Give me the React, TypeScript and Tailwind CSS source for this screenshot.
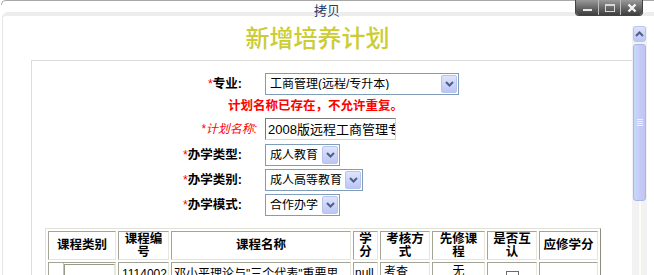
import React from "react";

const cellBorder =
  "border border-t-[#a4a494] border-l-[#a4a494] border-b-[#e6e6da] border-r-[#e6e6da]";

const DropButton = () => (
  <div className="flex h-[18px] w-[16px] shrink-0 items-center justify-center rounded-[2px] border border-[#b8c3ef] bg-linear-to-b from-[#dfe5fd] to-[#bcc6f5]">
    <svg width="9" height="6" viewBox="0 0 9 6">
      <path d="M1 1 L4.5 4.5 L8 1" fill="none" stroke="#4d6185" strokeWidth="2" />
    </svg>
  </div>
);

const Select = ({ value, width }: { value: string; width: string }) => (
  <div className={`flex h-[22px] items-center border border-[#7f9db9] bg-white pl-[4px] pr-[1px] ${width}`}>
    <span className="flex-1 overflow-hidden whitespace-nowrap text-[12px] leading-none text-black">
      {value}
    </span>
    <DropButton />
  </div>
);

const Label = ({ text }: { text: string }) => (
  <div className="w-[233px] pr-[23px] text-right text-[12.5px] font-bold leading-none text-black">
    <span className="font-normal text-[#ff0000]">*</span>
    {text}:
  </div>
);

const heads: { w: string; lines: string[] }[] = [
  { w: "w-[68px]", lines: ["课程类别"] },
  { w: "w-[51px]", lines: ["课程编", "号"] },
  { w: "w-[180px]", lines: ["课程名称"] },
  { w: "w-[25px]", lines: ["学", "分"] },
  { w: "w-[50px]", lines: ["考核方", "式"] },
  { w: "w-[53px]", lines: ["先修课", "程"] },
  { w: "w-[50px]", lines: ["是否互", "认"] },
  { w: "w-[59px]", lines: ["应修学分"] },
];

export default function App() {
  return (
    <div className="relative h-[275px] w-[654px] overflow-hidden bg-white font-['Liberation_Sans','Noto_Sans_CJK_SC',sans-serif]">
      {/* outer window frame */}
      <div className="h-[12px]">
        <div className="ml-[1px] h-[5px] rounded-tl-[5px] border-l border-t border-[#a8a8a8]" />
      </div>

      <div className="absolute left-1/2 top-[3px] -translate-x-1/2 text-[13px] leading-[15px] text-[#1b3d6f]">
        拷贝
      </div>

      {/* window buttons */}
      <div className="absolute right-[11px] top-0 flex h-[16px] overflow-hidden rounded-b-[4px] border border-t-0 border-[#444]">
        <div className="flex w-[22px] items-end justify-center bg-linear-to-b from-[#9a9a9a] to-[#3e3e3e] pb-[4px]">
          <div className="h-[2px] w-[9px] bg-[#e8e8e8]" />
        </div>
        <div className="flex w-[22px] items-center justify-center border-l border-[#bdbdbd] bg-linear-to-b from-[#9a9a9a] to-[#3e3e3e]">
          <div className="h-[8px] w-[10px] border border-t-2 border-[#d8d8d8]" />
        </div>
        <div className="flex w-[22px] items-center justify-center border-l border-[#bdbdbd] bg-linear-to-b from-[#9a9a9a] to-[#3e3e3e]">
          <svg width="10" height="10" viewBox="0 0 10 10">
            <path d="M1.5 1.5 L8.5 8.5 M8.5 1.5 L1.5 8.5" stroke="#f4f4f4" strokeWidth="2.4" />
          </svg>
        </div>
      </div>

      {/* inner frame */}
      <div className="ml-[2px] flex h-[263px] rounded-tl-[6px] border-l border-t-4 border-[#ededed] border-l-[#e6e6e6]">
        <div className="flex-1 overflow-hidden">
          <div className="mt-[11px] text-center text-[24px] font-medium leading-[24px] text-[#cccc33]">
            新增培养计划
          </div>

          <div className="ml-[28px] mt-[9px] w-[640px] border-l border-t border-[#dcdcdc] pt-[12px]">
            <div className="flex items-center">
              <Label text="专业" />
              <Select value="工商管理(远程/专升本)" width="w-[194px]" />
            </div>

            <div className="flex h-[23px] items-center pl-[196px] text-[12.5px] font-bold leading-none text-[#ff0000]">
              计划名称已存在，不允许重复。
            </div>

            <div className="flex items-center">
              <div className="w-[233px] pr-[8px] text-right text-[12px] italic leading-none text-[#ff0000]">
                *计划名称:
              </div>
              <div className="flex h-[22px] w-[131px] items-center overflow-hidden whitespace-nowrap border border-b-[#d4d4d4] border-l-[#7a7a7a] border-r-[#d4d4d4] border-t-[#7a7a7a] bg-white pl-[2px] text-[13px] leading-none text-black">
                2008版远程工商管理专升本
              </div>
            </div>

            <div className="mt-[4px] flex items-center">
              <Label text="办学类型" />
              <Select value="成人教育" width="w-[75px]" />
            </div>
            <div className="mt-[3px] flex items-center">
              <Label text="办学类别" />
              <Select value="成人高等教育" width="w-[98px]" />
            </div>
            <div className="mt-[3px] flex items-center">
              <Label text="办学模式" />
              <Select value="合作办学" width="w-[75px]" />
            </div>

            <table className="ml-[13px] mt-[12px] w-[555px] table-fixed border-separate border-spacing-[2px] border border-b-[#8e8e7e] border-l-[#e2e2d6] border-r-[#8e8e7e] border-t-[#e2e2d6]">
              <thead>
                <tr>
                  {heads.map((h) => (
                    <th
                      key={h.lines.join("")}
                      className={`${h.w} ${cellBorder} h-[29px] p-0 text-center align-middle text-[12.5px] font-bold leading-[13px] text-black`}
                    >
                      {h.lines.map((l) => (
                        <div key={l}>{l}</div>
                      ))}
                    </th>
                  ))}
                </tr>
              </thead>
              <tbody>
                <tr className="text-[12px] leading-[13px] text-black">
                  <td className={`${cellBorder} h-[40px] p-0 align-top`}>
                    <div className="flex h-full">
                      <div className="w-[15px] border-r border-[#c4c4b4]" />
                      <div className="mt-[1px] flex-1 border border-b-[#e6e6da] border-l-[#9a9a8a] border-r-[#e6e6da] border-t-[#9a9a8a]" />
                    </div>
                  </td>
                  <td className={`${cellBorder} px-[3px] pt-[5px] align-top`}>1114002</td>
                  <td className={`${cellBorder} px-[2px] pt-[5px] align-top`}>
                    邓小平理论与"三个代表"重要思想概论
                  </td>
                  <td className={`${cellBorder} overflow-hidden whitespace-nowrap px-[1px] pt-[4px] align-top`}>
                    null
                  </td>
                  <td className={`${cellBorder} px-[3px] pt-[3px] align-top`}>考查</td>
                  <td className={`${cellBorder} pt-[2px] text-center align-top`}>无</td>
                  <td className={`${cellBorder} pt-[8px] align-top`}>
                    <div className="mx-auto h-[13px] w-[13px] border border-[#6a6a6a] bg-white" />
                  </td>
                  <td className={`${cellBorder} p-0`} />
                </tr>
              </tbody>
            </table>
          </div>
        </div>

        {/* scrollbar */}
        <div className="flex w-[15px] flex-col pt-[10px]">
          <div className="flex flex-1 flex-col bg-[#f2f2f2]">
            <div className="mx-[1px] flex h-[16px] items-center justify-center rounded-[3px] border border-[#b6c4ee] bg-linear-to-b from-[#dde4fd] to-[#bcc6f5]">
              <svg width="9" height="6" viewBox="0 0 9 6">
                <path d="M1 5 L4.5 1.5 L8 5" fill="none" stroke="#4d6185" strokeWidth="2" />
              </svg>
            </div>
            <div className="mx-[1px] mt-[2px] flex h-[157px] items-center justify-center rounded-[3px] border border-[#a9b6ea] bg-linear-to-r from-[#c2dcf8] via-[#c8c9f8] to-[#bfc6f2]">
              <div className="flex flex-col gap-[1px]">
                <div className="h-px w-[6px] bg-[#eef2ff]" />
                <div className="h-px w-[6px] bg-[#eef2ff]" />
                <div className="h-px w-[6px] bg-[#eef2ff]" />
                <div className="h-px w-[6px] bg-[#eef2ff]" />
              </div>
            </div>
            <div className="flex flex-1 justify-center">
              <div className="w-[2px] bg-[#fffcf2]" />
            </div>
          </div>
        </div>
        <div className="w-[7px]" />
      </div>
    </div>
  );
}
